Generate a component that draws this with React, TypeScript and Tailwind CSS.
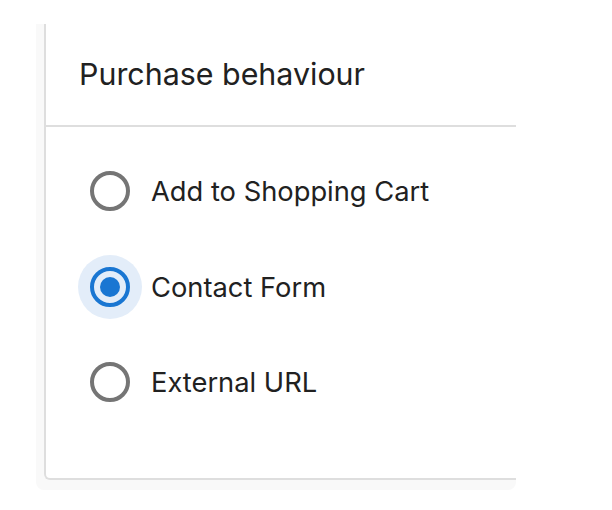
const options = [
  { label: "Add to Shopping Cart", checked: false },
  { label: "Contact Form", checked: true },
  { label: "External URL", checked: false },
];

function Radio({ checked }: { checked: boolean }) {
  return (
    <span
      className={
        "w-16 h-16 rounded-full flex items-center justify-center " +
        (checked ? "bg-[#e3edf9]" : "")
      }
    >
      <svg width="48" height="48" viewBox="0 0 48 48">
        <circle
          cx="24"
          cy="24"
          r="18"
          fill="none"
          stroke={checked ? "#1976d2" : "#757575"}
          strokeWidth="4"
        />
        {checked && <circle cx="24" cy="24" r="10" fill="#1976d2" />}
      </svg>
    </span>
  );
}

export default function App() {
  return (
    <div className="w-[612px] h-[510px] bg-white font-['Inter',sans-serif] pt-6">
      <div className="ml-9 w-[480px] h-[466px] bg-[#f9f9f9] rounded-b-lg pl-2 pb-2.5 flex">
        <div className="flex-1 bg-white border-l-2 border-b-2 border-[#dedede] rounded-bl-md flex flex-col">
          <div className="h-[103px] border-b-2 border-[#dedede] flex items-center pl-[33px]">
            <h2 className="text-[30.4px] text-[#212121]">Purchase behaviour</h2>
          </div>
          <div className="pt-8 pl-8 flex flex-col gap-[31.5px]">
            {options.map((o) => (
              <label key={o.label} className="flex items-center gap-[9px]">
                <Radio checked={o.checked} />
                <span className="text-[27.3px] text-[#212121] pt-[3px]">{o.label}</span>
              </label>
            ))}
          </div>
        </div>
      </div>
    </div>
  );
}
